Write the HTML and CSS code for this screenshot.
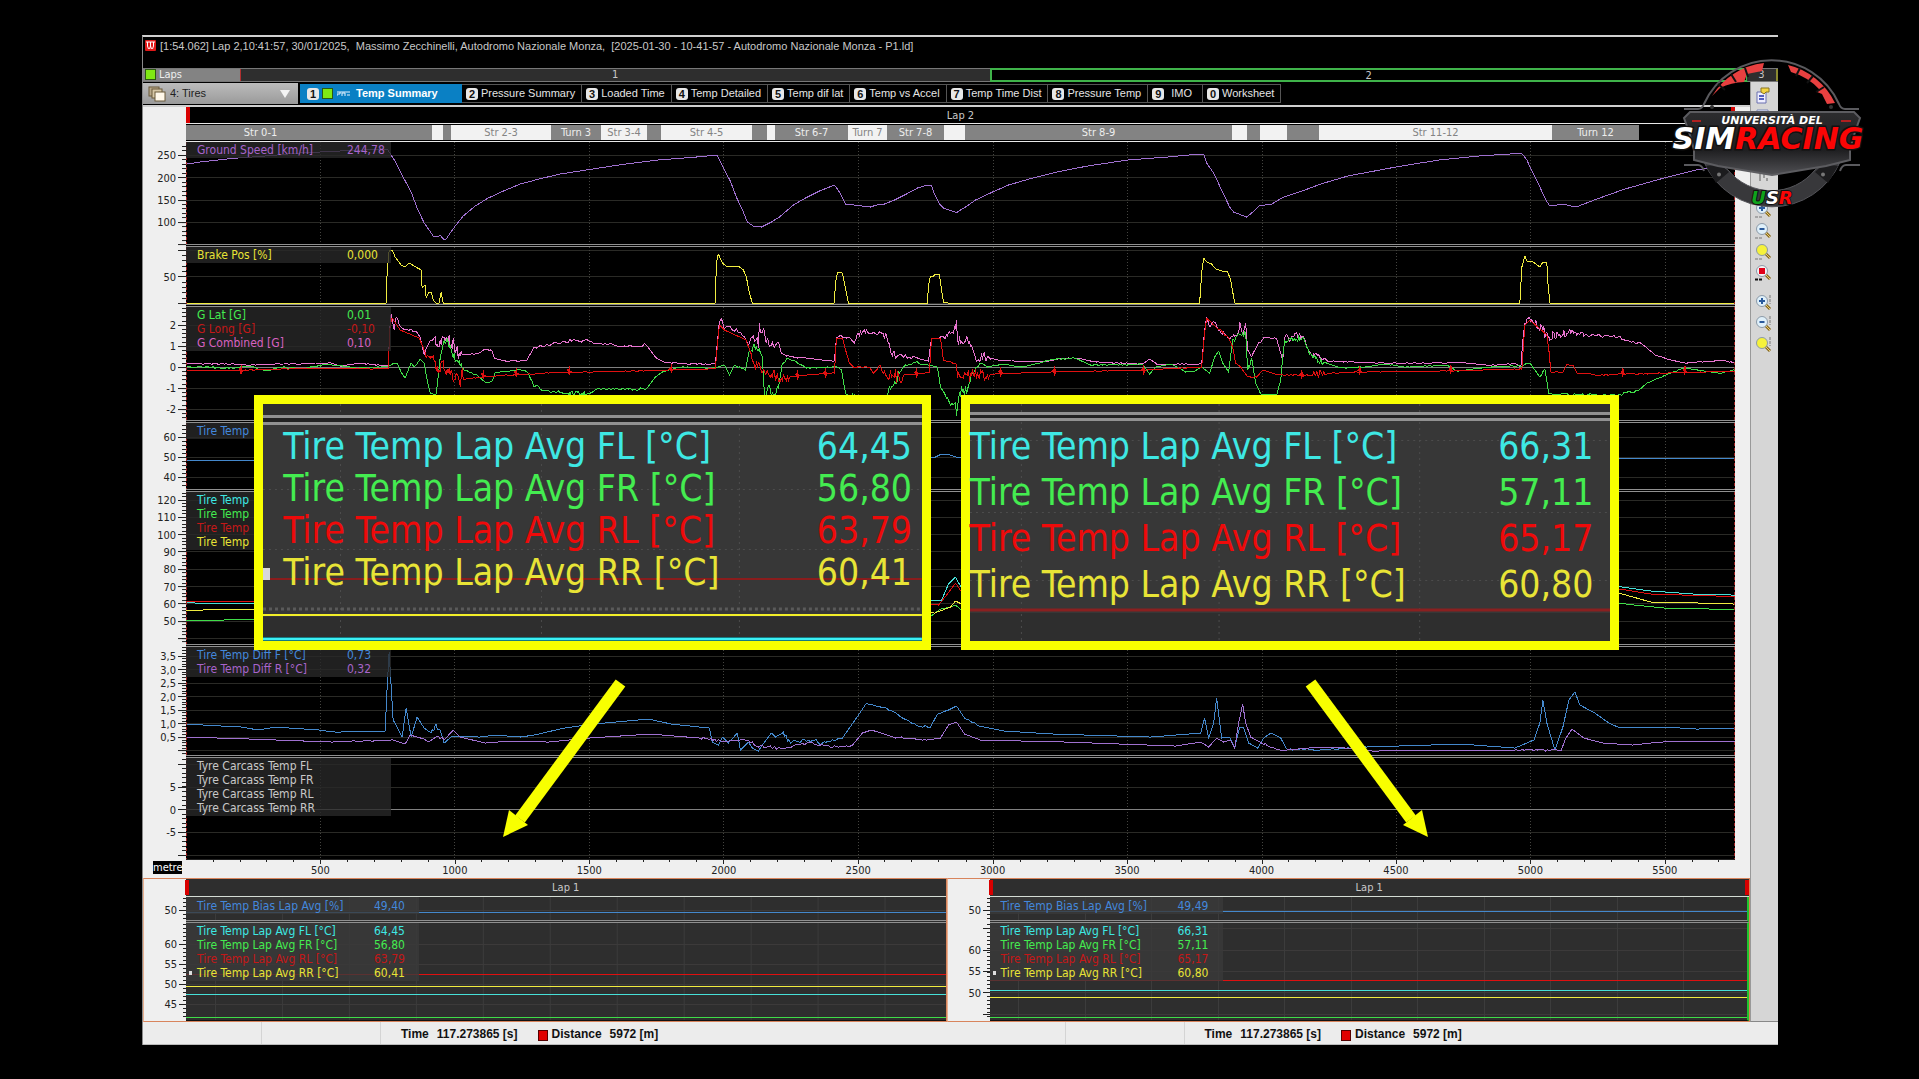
FILE: index.html
```html
<!DOCTYPE html>
<html lang="en">
<head>
<meta charset="utf-8">
<title>Telemetry - Tires - Temp Summary</title>
<link rel="stylesheet" href="styles.css">
</head>
<body>
<svg class="defs" width="0" height="0" aria-hidden="true">
  <symbol id="lens" viewBox="0 0 18 18">
    <path d="M11 10l5 5" stroke="#8a6a1c" stroke-width="3"/>
    <path d="M11 10l5 5" stroke="#e8cf7a" stroke-width="1"/>
    <circle cx="8" cy="7" r="5.500" fill="inherit" stroke="#8c9aa8"/>
  </symbol>
</svg>
<main class="app">
  <header class="title">
    <svg class="title-icon" viewBox="0 0 11 11"><rect width="11" height="11" rx="1" fill="#e01818"/><path d="M1 2h9M2.500 2v4l1 3M5.500 2v4l-1 3M5.500 6l1 3M8.500 2v4l-1 3" stroke="#fff" fill="none"/></svg>
    <h1>[1:54.062] Lap 2,10:41:57, 30/01/2025, &nbsp;Massimo Zecchinelli, Autodromo Nazionale Monza, &nbsp;[2025-01-30 - 10-41-57 - Autodromo Nazionale Monza - P1.ld]</h1>
  </header>

  <div class="laps">
    <div class="laps-name"><span class="swatch"></span>Laps</div>
    <div class="lap lap-one">1</div>
    <div class="lap lap-current">2</div>
    <div class="lap lap-last">3</div>
  </div>

  <div class="work">
    <div class="board">
      <nav class="tabs">
        <label class="picker">
          <svg viewBox="0 0 18 16"><rect x="1" y="1" width="10" height="9" fill="#b9a98a" stroke="#6b5a3a"/><rect x="4" y="3" width="10" height="9" fill="#d6c7a6" stroke="#6b5a3a"/><rect x="7" y="6" width="10" height="9" fill="#fff8ea" stroke="#6b5a3a"/></svg>
          <select aria-label="Workbook"><option>4: Tires</option></select>
          <i></i>
        </label>
        <button class="tab tab-on"><b>1</b><span class="swatch"></span><svg class="wave" viewBox="0 0 13 6"><path d="M0 1h13M0 5V3h3V1M5 5V2h3v3M10 4h3" stroke="#e8f4ff" fill="none"/></svg>Temp Summary</button>
        <button class="tab"><b>2</b>Pressure Summary</button>
        <button class="tab"><b>3</b>Loaded Time</button>
        <button class="tab"><b>4</b>Temp Detailed</button>
        <button class="tab"><b>5</b>Temp dif lat</button>
        <button class="tab"><b>6</b>Temp vs Accel</button>
        <button class="tab"><b>7</b>Temp Time Dist</button>
        <button class="tab"><b>8</b>Pressure Temp</button>
        <button class="tab tab-wide"><b>9</b>IMO</button>
        <button class="tab"><b>0</b>Worksheet</button>
      </nav>

      <div class="row lapbar"><div></div><div class="lapbar-name">Lap 2</div><div></div></div>
      <div class="row">
        <div></div>
        <div class="sections">
          <span style="flex-grow:149">Str 0-1</span><span style="flex-grow:97"></span><span class="lit" style="flex-grow:11"></span><span style="flex-grow:8"></span><span class="lit" style="flex-grow:100">Str 2-3</span><span style="flex-grow:50">Turn 3</span><span class="lit" style="flex-grow:46">Str 3-4</span><span style="flex-grow:14"></span><span class="lit" style="flex-grow:91">Str 4-5</span><span style="flex-grow:15"></span><span class="lit" style="flex-grow:8"></span><span style="flex-grow:73">Str 6-7</span><span class="lit" style="flex-grow:39">Turn 7</span><span style="flex-grow:57">Str 7-8</span><span class="lit" style="flex-grow:21"></span><span style="flex-grow:267">Str 8-9</span><span class="lit" style="flex-grow:15"></span><span style="flex-grow:13"></span><span class="lit" style="flex-grow:27"></span><span style="flex-grow:32"></span><span class="lit" style="flex-grow:233">Str 11-12</span><span style="flex-grow:87">Turn 12</span><span class="off" style="flex-grow:96"></span>
        </div>
        <div></div>
      </div>

      <section class="row panel speed">
        <svg class="ruler" data-panel="speed"></svg>
        <div class="plot"><svg data-plot="speed"></svg>
          <ul class="legend"><li class="violet"><span>Ground Speed [km/h]</span><span>244,78</span></li></ul></div>
        <div></div>
      </section>
      <section class="row panel brake">
        <svg class="ruler" data-panel="brake"></svg>
        <div class="plot"><svg data-plot="brake"></svg>
          <ul class="legend"><li class="yellow"><span>Brake Pos [%]</span><span>0,000</span></li></ul></div>
        <div></div>
      </section>
      <section class="row panel gforce">
        <svg class="ruler" data-panel="gforce"></svg>
        <div class="plot"><svg data-plot="gforce"></svg>
          <ul class="legend"><li class="green"><span>G Lat [G]</span><span>0,01</span></li><li class="red"><span>G Long [G]</span><span>-0,10</span></li><li class="pink"><span>G Combined [G]</span><span>0,10</span></li></ul></div>
        <div></div>
      </section>
      <section class="row panel bias">
        <svg class="ruler" data-panel="bias"></svg>
        <div class="plot"><svg data-plot="bias"></svg>
          <ul class="legend"><li class="blue"><span>Tire Temp</span></li></ul></div>
        <div></div>
      </section>
      <section class="row panel temp">
        <svg class="ruler" data-panel="temp"></svg>
        <div class="plot"><svg data-plot="temp"></svg>
          <ul class="legend"><li class="cyan"><span>Tire Temp</span></li><li class="green"><span>Tire Temp</span></li><li class="red"><span>Tire Temp</span></li><li class="yellow"><span>Tire Temp</span></li></ul></div>
        <div></div>
      </section>
      <section class="row panel diff">
        <svg class="ruler" data-panel="diff"></svg>
        <div class="plot"><svg data-plot="diff"></svg>
          <ul class="legend"><li class="blue"><span>Tire Temp Diff F [°C]</span><span>0,73</span></li><li class="violet"><span>Tire Temp Diff R [°C]</span><span>0,32</span></li></ul></div>
        <div></div>
      </section>
      <section class="row panel carcass">
        <svg class="ruler" data-panel="carcass"></svg>
        <div class="plot"><svg data-plot="carcass"></svg>
          <ul class="legend"><li><span>Tyre Carcass Temp FL</span></li><li><span>Tyre Carcass Temp FR</span></li><li><span>Tyre Carcass Temp RL</span></li><li><span>Tyre Carcass Temp RR</span></li></ul></div>
        <div></div>
      </section>

      <div class="row axis">
        <div class="unit"><span>metre</span></div>
        <div class="axis-scale">
          <svg data-axis></svg>
          <div class="axis-labels"><span>500</span><span>1000</span><span>1500</span><span>2000</span><span>2500</span><span>3000</span><span>3500</span><span>4000</span><span>4500</span><span>5000</span><span>5500</span></div>
        </div>
        <div></div>
      </div>

      <div class="subs">
        <section class="sub">
          <div class="sub-row"><div></div><div class="sub-lap">Lap 1</div></div>
          <div class="sub-row sub-bias">
            <svg class="ruler" data-panel="biasA"></svg>
            <div class="plot"><svg data-plot="biasA"></svg>
              <ul class="legend legend-wide"><li class="blue"><span>Tire Temp Bias Lap Avg [%]</span><span>49,40</span></li></ul></div>
          </div>
          <div class="sub-row sub-temp">
            <svg class="ruler" data-panel="tempA"></svg>
            <div class="plot"><svg data-plot="tempA"></svg>
              <ul class="legend legend-wide"><li class="cyan"><span>Tire Temp Lap Avg FL [°C]</span><span>64,45</span></li><li class="green"><span>Tire Temp Lap Avg FR [°C]</span><span>56,80</span></li><li class="red"><span>Tire Temp Lap Avg RL [°C]</span><span>63,79</span></li><li class="yellow active"><span>Tire Temp Lap Avg RR [°C]</span><span>60,41</span></li></ul></div>
          </div>
        </section>
        <section class="sub sub-end">
          <div class="sub-row"><div></div><div class="sub-lap">Lap 1</div></div>
          <div class="sub-row sub-bias">
            <svg class="ruler" data-panel="biasB"></svg>
            <div class="plot"><svg data-plot="biasB"></svg>
              <ul class="legend legend-wide"><li class="blue"><span>Tire Temp Bias Lap Avg [%]</span><span>49,49</span></li></ul></div>
          </div>
          <div class="sub-row sub-temp">
            <svg class="ruler" data-panel="tempB"></svg>
            <div class="plot"><svg data-plot="tempB"></svg>
              <ul class="legend legend-wide"><li class="cyan"><span>Tire Temp Lap Avg FL [°C]</span><span>66,31</span></li><li class="green"><span>Tire Temp Lap Avg FR [°C]</span><span>57,11</span></li><li class="red"><span>Tire Temp Lap Avg RL [°C]</span><span>65,17</span></li><li class="yellow active"><span>Tire Temp Lap Avg RR [°C]</span><span>60,80</span></li></ul></div>
          </div>
        </section>
      </div>
    </div>

    <aside class="tools">
      <button aria-label="Properties"><svg viewBox="0 0 18 18"><path d="M3 6h9v11H3z" fill="#eef" stroke="#6a70b0"/><path d="M5 10h5M5 13h5" stroke="#5560c0" stroke-width="2"/><path d="M7 2h8v4h-3l-2 2-3-2z" fill="#f2d443" stroke="#8a7420"/></svg></button>
      <button aria-label="Events"><svg viewBox="0 0 18 18"><path d="M3 3h11v11H3z" fill="#f4f4ff" stroke="#7a86b8"/></svg></button>
      <button class="gap-l" aria-label="Cursor"><svg viewBox="0 0 18 18"><path d="M6 3v12M10 3v9M13 12v3" stroke="#999" stroke-width="2"/></svg></button>
      <button class="gap-m" aria-label="Zoom in horizontally"><svg viewBox="0 0 18 18" fill="#dff0fa"><use href="#lens"/><path d="M5 7h6M8 4v6" stroke="#2a5a9c" stroke-width="2"/><path d="M1 16h8" stroke="#777" stroke-dasharray="3 1"/></svg></button>
      <button aria-label="Zoom out horizontally"><svg viewBox="0 0 18 18" fill="#dff0fa"><use href="#lens"/><path d="M5.500 7h5" stroke="#2a5a9c" stroke-width="2"/><path d="M1 16h8" stroke="#777" stroke-dasharray="3 1"/></svg></button>
      <button aria-label="Zoom full horizontally"><svg viewBox="0 0 18 18" fill="#f6f23a"><use href="#lens"/><path d="M1 16h8" stroke="#777" stroke-dasharray="3 1"/></svg></button>
      <button aria-label="Zoom to cursors"><svg viewBox="0 0 18 18" fill="#f4f4f4"><use href="#lens"/><path d="M5 4h6v6H5z" fill="#e00018"/><path d="M1 15.500h8" stroke="#111" stroke-width="2" stroke-dasharray="3 1"/></svg></button>
      <button class="gap-s" aria-label="Zoom in vertically"><svg viewBox="0 0 18 18" fill="#dff0fa"><use href="#lens"/><path d="M5 7h6M8 4v6" stroke="#2a5a9c" stroke-width="2"/><path d="M16 1v9" stroke="#777" stroke-dasharray="3 1"/></svg></button>
      <button aria-label="Zoom out vertically"><svg viewBox="0 0 18 18" fill="#dff0fa"><use href="#lens"/><path d="M5.500 7h5" stroke="#2a5a9c" stroke-width="2"/><path d="M16 1v9" stroke="#777" stroke-dasharray="3 1"/></svg></button>
      <button aria-label="Zoom full vertically"><svg viewBox="0 0 18 18" fill="#f6f23a"><use href="#lens"/><path d="M16 1v9" stroke="#777" stroke-dasharray="3 1"/></svg></button>
    </aside>
  </div>

  <footer class="status">
    <div class="status-half"><i></i><i></i><p><span>Time</span><span>117.273865 [s]</span></p><p class="mark"><span>Distance</span><span>5972 [m]</span></p></div>
    <div class="status-half"><i></i><i></i><p><span>Time</span><span>117.273865 [s]</span></p><p class="mark"><span>Distance</span><span>5972 [m]</span></p></div>
  </footer>

  <div class="callout callout-left">
    <svg viewBox="263 404 659 237" preserveAspectRatio="none">
      <path d="M263 404h659v12H263zM263 617h659v24H263z" fill="#2e2e2e"/>
      <path d="M340.500 404v237M541.500 404v237M739.500 404v237M263 489.500h659M263 549.500h659" stroke="#4c4c4c" stroke-dasharray="2 4"/>
      <path d="M263 609h659" stroke="#5a5a5a" stroke-width="3" stroke-dasharray="3 3"/>
      <path d="M263 420h659" stroke="#222" stroke-width="4"/>
      <path d="M263 416.500h659M263 423.500h659" stroke="#919191" stroke-width="3"/>
      <path d="M263 579h659" stroke="#8a1c1c" stroke-width="2"/>
      <path d="M263 615h659" stroke="#f2ee28" stroke-width="2"/>
      <path d="M263 639h659" stroke="#157c84" stroke-width="4"/>
      <path d="M263 639h659" stroke="#3cf0f4" stroke-width="2"/>
      <path d="M263 568h7v12h-7z" fill="#d8d8d8"/>
    </svg>
    <ul><li class="cyan"><span>Tire Temp Lap Avg FL [°C]</span><span>64,45</span></li><li class="green"><span>Tire Temp Lap Avg FR [°C]</span><span>56,80</span></li><li class="red"><span>Tire Temp Lap Avg RL [°C]</span><span>63,79</span></li><li class="yellow"><span>Tire Temp Lap Avg RR [°C]</span><span>60,41</span></li></ul>
  </div>
  <div class="callout callout-right">
    <svg viewBox="969 404 642 237" preserveAspectRatio="none">
      <path d="M969 404h642v9H969zM969 613h642v28H969z" fill="#2e2e2e"/>
      <path d="M1020.500 404v237M1218.500 404v237M1419.500 404v237M969 440.500h642M969 512.500h642M969 580.500h642" stroke="#4c4c4c" stroke-dasharray="2 4"/>
      <path d="M969 416.500h642" stroke="#222" stroke-width="4"/>
      <path d="M969 413.500h642M969 419.500h642" stroke="#919191" stroke-width="3"/>
      <path d="M969 610h642" stroke="#8a2020" stroke-width="3"/>
    </svg>
    <ul><li class="cyan"><span>Tire Temp Lap Avg FL [°C]</span><span>66,31</span></li><li class="green"><span>Tire Temp Lap Avg FR [°C]</span><span>57,11</span></li><li class="red"><span>Tire Temp Lap Avg RL [°C]</span><span>65,17</span></li><li class="yellow"><span>Tire Temp Lap Avg RR [°C]</span><span>60,80</span></li></ul>
  </div>
  <svg class="arrow arrow-left" viewBox="0 0 126 162"><path d="M119.500 6L19 142" stroke="#f8ff00" stroke-width="12"/><path d="M2 160L8 133L27 148Z" fill="#f8ff00"/></svg>
  <svg class="arrow arrow-right" viewBox="0 0 126 162"><path d="M6.500 6L107 142" stroke="#f8ff00" stroke-width="12"/><path d="M124 160L118 133L99 148Z" fill="#f8ff00"/></svg>

  <svg class="logo" viewBox="1666 54 204 160" role="img" aria-label="Università del Simracing">
    <defs><linearGradient id="plate" x1="0" y1="0" x2="0" y2="1"><stop offset="0" stop-color="#2c2c2e"/><stop offset=".6" stop-color="#1e1e20"/><stop offset="1" stop-color="#505054"/></linearGradient></defs>
    <path d="M1684 109h14q4 0 6-5a74 74 0 0 1 135 0q2 5 6 5h14" fill="none" stroke="#5a5a5e" stroke-width="2"/>
    <path d="M1712 96a70 70 0 0 1 52-33l-2 8-15 3-3 8a64 64 0 0 0-24 6z" fill="#e84040"/>
    <path d="M1788 65a70 70 0 0 1 47 38l-8 1-5-10-5-2 3-2a62 62 0 0 0-29-18z" fill="#e84040"/>
    <path d="M1718 84l7 6M1731 74l5 8M1745 68l3 9M1800 68l-4 8M1813 76l-6 7M1824 87l-8 5" stroke="#111" stroke-width="2"/>
    <circle cx="1712" cy="107" r="2" fill="#333"/><circle cx="1831" cy="107" r="2" fill="#333"/>
    <path d="M1684 165h14q4 0 6 6M1860 165h-14q-4 0-6 6" fill="none" stroke="#5a5a5e" stroke-width="2"/>
    <path d="M1704 162A74 74 0 0 0 1840 162L1831 158L1815 170A56 56 0 0 1 1728 170L1711 158Z" fill="#38383b" stroke="#55555a"/>
    <path d="M1706 166l14-2 9 8-13 11zM1838 166l-14-2-9 8 13 11z" fill="#1c1c1e"/>
    <circle cx="1719" cy="174.500" r="2" fill="#777"/><circle cx="1823" cy="174.500" r="2" fill="#777"/>
    <path d="M1690 112h164l6 6-5 14-5 18v10l-24 6-54 9-54-9-24-6v-10l-5-18-5-14z" fill="url(#plate)" stroke="#5c5c60" stroke-width="2"/>
    <path d="M1692 121h9M1841 121h10" stroke="#b02020" stroke-width="2"/>
    <text class="logo-top" x="1772" y="124" text-anchor="middle">UNIVERSITÀ DEL</text>
    <text class="logo-main" x="1768" y="149" text-anchor="middle"><tspan fill="#fff">SIM</tspan><tspan fill="#fb0505">RACING</tspan></text>
    <text class="logo-usr" x="1772" y="204" text-anchor="middle"><tspan fill="#0fa31c">U</tspan><tspan fill="#fff">S</tspan><tspan fill="#fb0505">R</tspan></text>
  </svg>
</main>
<script src="charts.js"></script>
</body>
</html>
```

FILE: styles.css
```css
* { box-sizing: border-box; }
body {
  margin: 0;
  background: #000;
  color: #c8c8c8;
  font: 11px/14px "DejaVu Sans Condensed", "DejaVu Sans", sans-serif;
  overflow-x: hidden;
}
ul, p, h1 { margin: 0; padding: 0; list-style: none; }
button, select { font: inherit; color: inherit; border: 0; background: none; padding: 0; margin: 0; }
svg { display: block; }
.defs { position: absolute; }

.app {
  position: relative;
  margin: 35px 141px 0 142px;
  border-top: 2px solid #cfcfcf;
  border-left: 1px solid #8a8a8a;
}

.title { display: flex; align-items: flex-start; gap: 4px; height: 31px; padding: 3px 0 0 2px; }
.title-icon { width: 11px; height: 11px; }
.title h1 { font-family: "Liberation Sans", Arial, sans-serif; font-size: 11px; line-height: 12px; font-weight: 400; white-space: nowrap; }

.swatch { width: 11px; height: 11px; background: #80ea14; border: 1px solid #2c5a10; }
.laps { display: flex; height: 14px; line-height: 12px; border-bottom: 1px solid #777; border-top: 1px solid #777; }
.laps-name { display: flex; gap: 3px; width: 97px; padding-left: 2px; background: #838383; color: #eee; }
.lap { flex: 750 0 0; text-align: center; background: #2e2e2e; border-left: 1px solid #b03030; }
.lap-current { flex-grow: 756; line-height: 10px; background: #000; border: 2px solid #3fb34a; margin: -1px 0; padding-top: 1px; }
.lap-last { flex: 0 0 31px; margin-left: -1px; border: 0; border-right: 2px solid #8a8a30; }

.work { display: flex; }
.board { flex: 1; min-width: 0; }

.tabs { display: flex; height: 25px; padding: 2px 0; border-bottom: 2px solid #cfcfcf; font-family: "Liberation Sans", Arial, sans-serif; line-height: 13px; }
.picker { display: flex; align-items: center; gap: 4px; width: 155px; margin: -1px 2px -1px 0; padding: 0 8px 0 5px; background: linear-gradient(#bcbcbc, #9a9a9a); color: #222; }
.picker svg { width: 18px; height: 16px; }
.picker select { flex: 1; appearance: none; }
.picker i { border: 5px solid transparent; border-top: 8px solid #f4f4f4; border-bottom: 0; }
.tab { display: flex; align-items: center; gap: 3px; padding: 0 6px 0 4px; border: 1px solid #555; border-left: 0; color: #e4e4e4; white-space: nowrap; }
.tab b { width: 12px; height: 12px; line-height: 12px; border-radius: 3px; background: #e8e8e8; color: #111; text-align: center; }
.tab-wide { padding-right: 10px; }
.tab-wide b { margin-right: 4px; }
.tab-on { width: 162px; padding-left: 7px; background: #0a80c4; border-color: #0a80c4; color: #fff; font-weight: 700; }
.wave { width: 13px; height: 6px; margin: 0 3px 0 1px; }

.row { display: grid; grid-template-columns: 43px 1fr 15px; background: #efefef; }
.lapbar-name { height: 16px; background: #000; text-align: center; border-left: 4px solid #d80000; border-right: 4px solid #d80000; line-height: 17px; }
.sections { display: flex; height: 19px; padding: 1px 0; background: #000; border: solid #e8e8e8; border-width: 1px 0; line-height: 15px; color: #eee; }
.sections span { flex: 1 0 0; min-width: 0; background: #838383; text-align: center; white-space: nowrap; }
.sections .lit { background: #f2f2f2; color: #838383; }
.sections .off { background: #000; }

.plot { position: relative; background: #000; border-bottom: 3px double #909090; }
.plot > svg, .axis-scale > svg { width: 100%; height: 100%; shape-rendering: crispEdges; }
.ruler { width: 43px; height: 100%; overflow: hidden; font-size: 11px; fill: #222; }
.speed { height: 105px; }
.brake { height: 60px; }
.gforce { height: 116px; }
.bias { height: 69px; }
.temp { height: 155px; }
.diff { height: 111px; }
.carcass { height: 101px; }
.carcass .plot { border-bottom: 0; }

.legend { position: absolute; left: 0; top: 0; width: 205px; padding: 1px 0 1px 11px; background: rgba(40, 40, 40, .8); font-size: 12px; }
.legend li { display: grid; grid-template-columns: 150px 1fr; height: 14px; white-space: nowrap; }
.legend-wide { width: 233px; background: rgba(58, 58, 58, .8); }
.legend-wide li { grid-template-columns: 177px 1fr; }
.sub-bias .legend { padding-top: 2px; }
.legend .active::before { content: ""; position: absolute; left: 3px; margin-top: 5px; width: 3px; height: 4px; background: #ddd; }
.violet { color: #a864cc; }
.yellow { color: #e8e436; }
.green { color: #44ec50; }
.red { color: #c41818; }
.pink { color: #d862c0; }
.blue { color: #4488dc; }
.cyan { color: #3ee8e4; }

.axis { height: 19px; color: #222; }
.unit { padding: 2px 4px 0 10px; }
.unit span { display: block; background: #000; color: #fff; line-height: 13px; text-align: center; }
.axis-scale > svg { height: 5px; }
.axis-labels { display: flex; margin: 0 0 0 4.34%; }
.axis-labels span { flex: 0 0 9.073%; text-align: center; }

.subs { display: grid; grid-template-columns: 1fr 1fr; height: 144px; }
.sub { border: 1px solid #d8845c; border-left-color: #e8b090; background: #efefef; }
.sub-row { display: grid; grid-template-columns: 42px 1fr; }
.sub-lap { height: 18px; line-height: 18px; text-align: center; background: #2e2e2e; border-bottom: 1px solid #d4dcd4; position: relative; }
.sub-lap::before, .sub-end .sub-lap::after { content: ""; position: absolute; left: -1px; top: 1px; width: 4px; height: 15px; background: #d80000; }
.sub-end .sub-lap::after { left: auto; right: 0; }
.sub-bias { height: 26px; }
.sub-temp { height: 98px; }
.sub .plot { background: #2e2e2e; }
.sub-temp .plot { border-bottom: 1px solid #111; }
.sub-end .plot { border-right: 2px solid #1fc42c; }

.tools { flex: 0 0 28px; padding: 2px 4px 0 3px; background: #d6d6d6; border-left: 1px solid #999; border-bottom: 1px solid #888; }
.tools button { display: block; width: 20px; height: 21px; }
.tools svg { width: 18px; height: 18px; }
.tools .gap-l { margin-top: 38px; }
.tools .gap-m { margin-top: 14px; }
.tools .gap-s { margin-top: 9px; }

.status { display: flex; height: 23px; padding-right: 28px; background: #ececec; border-bottom: 1px solid #bbb; color: #111; font: 700 12px/24px "Liberation Sans", Arial, sans-serif; }
.status-half { flex: 1; display: flex; }
.status-half i { flex: 0 0 119px; border-right: 1px solid #d4d4d4; }
.status-half p { display: flex; gap: 8px; margin-left: 20px; }
.status-half .mark::before { content: ""; width: 8px; height: 9px; margin: 8px -4px 0 0; background: #e00000; border: 1px solid #500; }

.callout { position: absolute; top: 358px; height: 255px; border: 9px solid #f8ff00; background: #373737; }
.callout svg { position: absolute; left: 0; top: 0; width: 100%; height: 100%; }
.callout ul { position: relative; font-size: 37px; }
.callout li { display: flex; justify-content: space-between; white-space: nowrap; }
.callout .red { color: #ee0a0a; }
.callout-left { left: 6.8%; width: 41.4%; }
.callout-left ul { padding: 22px 10px 0 20px; line-height: 42px; }
.callout-right { left: 50%; width: 40.3%; }
.callout-right ul { padding: 20px 17px 0 0; line-height: 46px; }
.arrow { position: absolute; top: 640px; width: 126px; height: 162px; }
.arrow-left { left: 21.9%; }
.arrow-right { left: 71%; }

.logo { position: absolute; top: 17px; right: -92px; width: 204px; height: 160px; font-family: "DejaVu Sans", sans-serif; font-weight: 700; font-style: italic; }
.logo-top { font-size: 11px; fill: #fff; }
.logo-main { font-size: 30px; stroke: #111; stroke-width: 3px; paint-order: stroke; }
.logo-usr { font-size: 18px; stroke: #111; stroke-width: 2px; paint-order: stroke; }
```

FILE: charts.js
```js
const NS = "http://www.w3.org/2000/svg";
const colors = { violet: "#9f70d0", yellow: "#f0ec40", green: "#3fdc48", red: "#e01010", pink: "#e874d0", blue: "#4488cc", cyan: "#46e0d8" };

/* Repeatable jitter, so that the sensor noise looks the same on every load. */
let seed = 7;
const jitter = () => (seed = (seed * 16807) % 2147483647) / 1073741823.5 - 1;

/* Each point is [x, y, noise]; the noise applies on the way to that point. */
function trace(points, spikes = []) {
  const out = [points[0].slice(0, 2)];
  for (let i = 1; i < points.length; i++) {
    const [x0, y0] = points[i - 1];
    const [x1, y1, amp = 0] = points[i];
    if (amp) {
      const n = Math.max(1, Math.round((x1 - x0) / (amp > 2 ? 1 : 2)));
      for (let k = 1; k < n; k++) out.push([x0 + (x1 - x0) * k / n, y0 + (y1 - y0) * k / n + jitter() * amp]);
    }
    out.push([x1, y1]);
  }
  const d = "M" + out.map(p => p[0].toFixed(1) + " " + p[1].toFixed(1)).join("L");
  return d + spikes.map(([x, y]) => `M${x - 2} ${y}L${x - 1} ${y - 2}L${x} ${y + 4}L${x} ${y - 5}L${x + 1} ${y + 2}L${x + 2} ${y}`).join("");
}

const speed = [[187,164],[200,162],[231,158.500],[265,156],[300,153],[340,151],[387,149],[391,155],[396,163],[403,177],[411,192],[417,208],[424,223],[429,230],[433,236],[437,237],[440,235],[444,240],[446,239],[450,233],[455,226],[463,216],[475,206],[488,198],[504,190.700],[520,184],[540,178.700],[560,174],[589,169.500],[622,164.500],[658,160],[700,156.700],[710,155.700],[717,155.300],[720,162],[724,170],[730,181],[736,197],[743,212],[747,222],[753,226],[761,227],[771,222],[779,217],[793,205],[805,198],[819,191],[834,185],[839,192],[845,204],[858,205.500],[870,207],[876,205],[884,204],[894,200],[906,194],[917,188],[927,185],[931,185],[933,192],[939,204],[943,208],[956,212.500],[965,207],[975,200],[992,192],[1008,185],[1032,178],[1056,172],[1087,166],[1127,160],[1167,157],[1194,154.500],[1203,154.300],[1206,163],[1213,173],[1220,188],[1229,207],[1233,212],[1246,217],[1252,212],[1258,206],[1271,204],[1283,197],[1300,191.500],[1320,184],[1347,176],[1395,167],[1438,160],[1478,156],[1509,154],[1521,153.500],[1526,160],[1533,175],[1539,187],[1545,200],[1549,206],[1562,204],[1575,207],[1596,199],[1624,189],[1663,178],[1695,170],[1728,165],[1734,164]];
const brake = [[186,303],[386,303],[387,273],[389,250.500],[392,250],[395,257],[401,265],[405,267],[409,263],[414,266],[421,270],[422,288],[425,285],[426,298],[429,292],[431,292],[433,300],[436,303],[439,303],[441,292],[443,303],[715,303],[716,263],[718,254],[722,263],[726,266],[738,266],[743,270],[746,277],[749,293],[752,303],[834,303],[835,283],[837,273],[839,272],[842,273],[844,283],[848,303],[927,303],[928,285],[930,276],[933,276],[935,274],[939,275],[940,283],[943,302],[948,303],[1199,303],[1201,273],[1203,258],[1206,262],[1211,264],[1215,269],[1221,271],[1227,272],[1230,280],[1234,303],[1519,303],[1521,267],[1524,256],[1526,261],[1532,262],[1535,264],[1539,267],[1542,262],[1546,263],[1547,283],[1549,303],[1734,303]];
const combined = [[186,363.500],[238,364,.6],[246,365,.5],[275,364,.6],[315,364,.6],[330,362.700,.5],[340,366,.5],[360,363.300,.5],[388,366,.6],[390,323],[391,314],[394,330],[396,317],[401,327,2],[411,329,2],[420,337,2],[424,355],[428,345,2],[434,338,2],[438,347,7],[443,337,5],[447,340,3],[454,345,6],[456,350,7],[462,355,7],[466,355,1],[479,353,.6],[487,349,1],[492,351,.6],[494,358],[501,360,.5],[526,361,1],[534,347],[548,345,2],[564,341,1.500],[585,340,2],[593,343,1.500],[609,344,1.500],[620,347,1],[646,345,1.500],[656,358],[664,362],[683,364,.5],[715,364,.6],[719,322],[721,318],[724,329],[728,327,2],[740,332,2],[748,345,2],[752,338,3],[756,340,7],[760,332,12],[766,343,9],[778,342,5],[781,354,2],[787,355,4],[799,357,2],[814,359,.5],[834,361,.4],[836,338],[839,336],[844,337,1],[849,337,2],[854,343,1],[857,333,3],[867,332,5],[883,334,2],[887,340,4],[890,352,5],[897,356,4],[917,358,2],[928,361,.5],[931,338],[939,338,1.500],[944,338,2],[951,332,4],[955,328,5],[956,320],[957,340],[962,343,5],[967,338,3],[972,348,4],[975,358],[987,356,5],[990,359],[1017,361.500,.4],[1046,361,.4],[1064,358,.6],[1074,358,.6],[1096,362,.4],[1142,364,.4],[1149,359],[1156,364,.4],[1201,364,.6],[1204,330],[1206,317],[1209,327],[1212,322],[1217,328,3],[1228,338,3],[1235,335,3],[1238,334,3],[1239,322],[1242,335],[1245,323],[1247,350],[1251,357],[1258,342,2],[1265,337,2],[1276,339,1.500],[1280,353],[1282,360],[1284,338],[1303,337,5],[1306,347,2],[1311,355],[1323,358,4],[1329,361,2],[1380,363,.5],[1446,363,.4],[1454,362],[1486,365,.4],[1515,364,.5],[1520,367],[1522,340],[1524,323],[1529,319,4],[1534,323,3],[1542,330,4],[1548,337,5],[1558,336,5],[1568,331,4],[1584,335,2.500],[1617,337,1.800],[1642,345,1.500],[1654,355,.6],[1670,360,.5],[1684,363],[1721,360,.5],[1734,363,.4]];
const lateral = [[187,366.500],[235,368,1],[250,366,.8],[266,371,.6],[283,367,.6],[303,369,.6],[328,364,.6],[352,368,.8],[385,367,.8],[391,365],[397,363,1],[401,372],[405,378],[411,363],[414,367],[420,359,1],[424,363],[427,380],[430,393],[436,394,1],[438,377],[440,358],[444,340],[450,345,4],[456,360,8],[464,370,3],[479,377,1],[486,383],[492,381,.6],[495,372],[524,370,.6],[528,373],[534,387,1],[548,390,2],[560,393,2],[589,394,2.500],[597,389,1],[646,389,1.200],[655,377],[662,372],[679,367],[715,368,.6],[724,365],[729,375],[734,365],[745,370,1],[749,350],[756,346,4],[762,357,4],[764,393],[778,388,7],[782,363],[787,358,3],[796,362,1],[806,368,.5],[837,367,.5],[841,370],[844,387],[846,396],[855,396,3],[887,396,1],[889,386,4],[895,383,5],[899,373,4],[903,367,2],[915,362,1.500],[928,365,1],[937,367],[940,387],[944,393,2],[949,402,3],[955,402,4],[956,415],[959,392],[967,390,6],[972,373,4],[981,363,2],[987,367],[1003,364,.4],[1021,367,.4],[1039,363,.4],[1053,359,.4],[1074,358,.8],[1090,365,.4],[1142,364.500,.9],[1149,374],[1155,367],[1171,364],[1185,372,.5],[1194,371],[1201,367],[1209,373],[1214,357],[1218,351],[1222,363],[1228,372],[1232,340],[1239,335,3],[1245,333,3],[1247,370],[1251,358,3],[1255,383],[1260,394],[1276,395],[1280,380],[1282,357],[1284,340],[1303,338,3],[1306,347],[1313,357,3],[1323,362,4],[1340,368],[1364,367,.4],[1384,364,.4],[1405,367,.4],[1446,365,.5],[1456,371],[1486,367,.6],[1521,366,.5],[1529,363,2],[1539,377],[1544,369,1],[1548,394],[1617,395,1],[1637,391,1.500],[1646,383],[1658,378,.6],[1682,368,.4],[1719,373,.4],[1734,370,.5]];
const longitudinal = [[187,370.500],[238,370.500,.4],[303,368.500,.5],[388,368.500,.5],[390,325],[392,318],[400,330],[419,338],[424,350],[426,358,3],[432,358,5],[438,373,6],[442,362,6],[448,373,5],[454,380,8],[463,379,11],[466,379,1],[483,377,.4],[507,375,.4],[548,373,.5],[671,370,.4],[715,368.500,.4],[719,325],[724,330],[746,340],[750,353,3],[754,365,4],[764,370,6],[781,378,5],[789,377,5],[806,375,.4],[834,373,.4],[836,338],[842,338],[846,353],[849,363],[853,367],[869,367,.8],[873,373],[880,365,1],[883,373,3],[894,377,5],[903,375,7],[924,373,.4],[929,372],[931,338],[940,338],[943,360],[956,364,.4],[957,377],[967,375,5],[989,375,7],[992,374],[1053,372,.2],[1142,370,.3],[1201,367,.4],[1204,333],[1206,318],[1228,338,1],[1232,347],[1235,363],[1240,367],[1247,377],[1256,377,.5],[1262,370],[1278,375],[1296,375,1],[1312,375,1],[1324,375,5],[1328,373],[1364,372,.4],[1446,371,.3],[1521,369,.4],[1524,325],[1529,320],[1546,335],[1548,350],[1550,372],[1562,372,.8],[1566,364],[1572,365,1],[1576,373],[1597,375,.6],[1670,373,.6],[1734,371,.3]];
/* Gear-shift kicks, as [x, y] on the longitudinal trace. */
const spikes = [[241,370],[483,375],[516,373],[569,371],[671,369],[797,375],[825,373],[916,373],[1000,372],[1054,371],[1143,370],[1301,375],[1359,371],[1450,370],[1622,373],[1684,371]];
const diffFront = [[186,724],[222,726],[242,727],[258,730],[275,727],[320,730],[332,732],[385,731,.4],[387,687],[389,652],[393,720],[397,727],[402,737],[406,708],[411,737],[417,717],[424,728],[431,733],[435,725,3],[440,730,3],[444,743],[452,736],[479,737],[495,735],[520,737],[534,735],[564,728],[593,724],[648,719],[671,724],[709,728],[712,742],[718,745],[722,737],[728,743],[737,733],[740,750],[748,742],[752,748],[758,751],[762,745],[771,733],[775,737],[782,733],[790,743,3],[808,740,2],[822,743,2],[842,738,1],[856,718],[866,703],[873,705,1],[887,709,1],[904,719,1],[918,726,1],[930,727,1],[937,714],[948,710,1],[956,706],[964,718],[979,726,1],[1004,731],[1053,734],[1150,737],[1200,733],[1204,718],[1208,738],[1213,723],[1216,698],[1221,738],[1229,737],[1234,748],[1239,727],[1243,728],[1248,743],[1257,748],[1263,738],[1270,733],[1280,738],[1286,749],[1315,750,1],[1365,747,.5],[1460,744],[1514,748],[1533,740],[1539,723],[1542,700],[1546,723],[1554,750],[1562,727],[1568,700],[1574,692],[1579,705],[1594,713],[1608,723],[1617,727],[1663,727],[1696,729],[1734,728]];
const diffRear = [[186,737],[250,739],[332,742],[393,740,.5],[405,744],[410,735],[424,739],[428,742],[436,737],[444,740,2],[453,730],[460,737],[485,743],[509,741],[548,742],[589,738],[650,734],[699,738],[724,741,1.500],[748,740,1],[756,746,2],[780,748,2],[808,742,2],[830,747,1],[852,745,1],[862,733],[871,730],[893,737],[926,740,1],[940,738],[948,725],[956,722],[964,734],[980,740],[1065,742],[1175,746],[1200,742],[1208,747],[1216,738],[1223,742],[1230,740],[1234,748],[1238,723],[1242,704],[1245,723],[1250,737],[1261,743],[1280,750,1],[1286,750],[1319,747],[1345,748],[1372,751],[1514,750],[1537,750,.5],[1552,749,2],[1560,751],[1565,738],[1571,729],[1583,738],[1602,743],[1632,745],[1659,742],[1734,741]];

const flat = y => [[100, y], [1760, y]];
const main = { left: 186, width: 1548, x0: 320.600, dx: 134.350 };
const subA = { left: 186, width: 760, x0: 215.500, dx: 67, sub: true };
const subB = { left: 990, width: 757, x0: 1018.500, dx: 66.500, sub: true };
const panels = {
  speed: { ...main, top: 142, height: 102, y0: 155.300, dy: 22.350, minor: 5, labels: ["250", "200", "150", "100", ""], lines: [["violet", speed]] },
  brake: { ...main, top: 247, height: 57, y0: 250.300, dy: 26.500, minor: 5, labels: ["", "50", ""], lines: [["yellow", brake]] },
  gforce: { ...main, top: 307, height: 113, y0: 325.300, dy: 21, minor: 5, zero: 367.500, labels: ["2", "1", "0", "-1", "-2"], lines: [["pink", combined], ["green", lateral], ["red", longitudinal, spikes]] },
  bias: { ...main, top: 423, height: 66, y0: 437.300, dy: 20, minor: 5, labels: ["60", "50", "40"], lines: [["blue", [[186,460],[700,460],[925,457.500],[935,457],[940,454.500],[950,455],[957,457.500],[1600,458],[1734,458]]]] },
  temp: { ...main, top: 492, height: 152, y0: 500, dy: 17.300, minor: 5, labels: ["120", "110", "100", "90", "80", "70", "60", "50", ""], lines: [["green", [[186,620],[224,620],[225,619],[900,619],[932,615],[940,609],[950,607],[955,605],[961,610],[1600,601],[1634,605],[1664,608],[1734,609.500]]], ["yellow", [[186,610],[203,610],[204,609],[900,609],[934,613],[950,607],[955,601],[961,604],[1600,588],[1650,602],[1700,603],[1734,604]]], ["red", [[186,601.500],[900,602],[938,605],[947,594],[955,583],[961,592],[1600,586],[1650,594],[1734,596.500]]], ["cyan", [[186,602],[200,603.500],[900,603],[930,600.500],[941,600.500],[948,584],[955,577],[961,588],[1600,584],[1650,591],[1700,594.500],[1734,595]]]] },
  diff: { ...main, top: 647, height: 108, y0: 656, dy: 13.570, minor: 5, labels: ["3,5", "3,0", "2,5", "2,0", "1,5", "1,0", "0,5", ""], lines: [["blue", diffFront], ["violet", diffRear]] },
  carcass: { ...main, top: 758, height: 101, y0: 764.300, dy: 22.700, minor: 5, zero: 809.500, labels: ["", "5", "0", "-5", ""], lines: [] },
  biasA: { ...subA, top: 897, height: 23, y0: 910.300, dy: 30, minor: 5, labels: ["50"], lines: [["blue", flat(912.500)]] },
  tempA: { ...subA, top: 923, height: 97, y0: 944.300, dy: 20, minor: 5, labels: ["60", "55", "50", "45"], lines: [["red", flat(974.500)], ["yellow", flat(986.500)], ["cyan", flat(994.500)], ["green", flat(1017.500)]] },
  biasB: { ...subB, top: 897, height: 23, y0: 910.300, dy: 30, minor: 5, labels: ["50"], lines: [["blue", flat(911.500)]] },
  tempB: { ...subB, top: 923, height: 97, y0: 928.600, dy: 21.400, minor: 5, labels: ["", "60", "55", "50", ""], lines: [["red", flat(980.500)], ["cyan", flat(990.500)], ["yellow", flat(997.500)], ["green", flat(1017.500)]] }
};

function add(svg, name, attrs, text) {
  const el = document.createElementNS(NS, name);
  for (const key in attrs) el.setAttribute(key, attrs[key]);
  if (text) el.textContent = text;
  svg.append(el);
  return el;
}
const stroke = (svg, d, color, extra = {}) => add(svg, "path", { d, stroke: color, fill: "none", "vector-effect": "non-scaling-stroke", ...extra });
const snap = v => Math.floor(v) + .5;

for (const svg of document.querySelectorAll("[data-plot]")) {
  const p = panels[svg.dataset.plot];
  const right = p.left + p.width;
  svg.setAttribute("viewBox", [p.left, p.top, p.width, p.height].join(" "));
  svg.setAttribute("preserveAspectRatio", "none");
  let across = "", up = "";
  p.labels.forEach((_, i) => across += `M${p.left} ${snap(p.y0 + i * p.dy)}H${right}`);
  for (let x = p.x0; x < right; x += p.dx) up += `M${snap(x)} ${p.top}V${p.top + p.height}`;
  stroke(svg, across, p.sub ? "#3c3a3a" : "#2a2a26");
  stroke(svg, up, p.sub ? "#3c3c3c" : "#444440", p.sub ? {} : { "stroke-dasharray": "1 2" });
  if (p.zero) stroke(svg, `M${p.left} ${p.zero}H${right}`, "#808080");
  for (const [color, points, marks] of p.lines) stroke(svg, trace(points, marks), colors[color], { "stroke-linejoin": "round" });
  if (!p.sub) stroke(svg, `M${p.left + .5} ${p.top}V${p.top + p.height}M${right - .5} ${p.top}V${p.top + p.height}`, "#a02020", { "stroke-dasharray": "3 2" });
}

for (const svg of document.querySelectorAll("[data-panel]")) {
  const p = panels[svg.dataset.panel];
  const bottom = p.top + p.height;
  svg.setAttribute("viewBox", `0 ${p.top} 43 ${bottom - p.top + 3}`);
  svg.setAttribute("preserveAspectRatio", "xMinYMin slice");
  let ticks = "";
  const step = p.sub ? 4 : p.dy / p.minor;
  for (let y = p.y0; y > p.top; y -= step) ticks += `M39 ${snap(y)}H43`;
  for (let y = p.y0; y < bottom; y += step) ticks += `M39 ${snap(y)}H43`;
  p.labels.forEach((label, i) => {
    const y = p.y0 + i * p.dy;
    ticks += `M35 ${snap(y)}H43`;
    if (label) add(svg, "text", { x: 33, y: Math.round(y) + 4, "text-anchor": "end" }, label);
  });
  stroke(svg, ticks, "#222");
}

const axis = document.querySelector("[data-axis]");
axis.setAttribute("viewBox", "186 0 1548 5");
axis.setAttribute("preserveAspectRatio", "none");
let marks = "M186 .5H1734";
for (let i = 1; i < 58; i++) marks += `M${snap(186.300 + i * 26.870)} 0V${i % 5 ? 3 : 5}`;
stroke(axis, marks, "#222");
```
